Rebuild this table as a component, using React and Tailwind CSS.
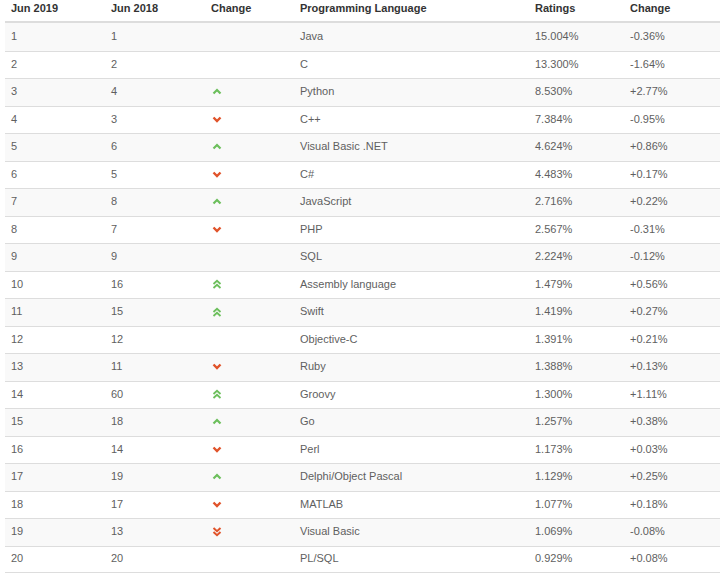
import React from "react";

const rows = [
  [1, 1, "", "Java", "15.004%", "-0.36%"],
  [2, 2, "", "C", "13.300%", "-1.64%"],
  [3, 4, "up", "Python", "8.530%", "+2.77%"],
  [4, 3, "down", "C++", "7.384%", "-0.95%"],
  [5, 6, "up", "Visual Basic .NET", "4.624%", "+0.86%"],
  [6, 5, "down", "C#", "4.483%", "+0.17%"],
  [7, 8, "up", "JavaScript", "2.716%", "+0.22%"],
  [8, 7, "down", "PHP", "2.567%", "-0.31%"],
  [9, 9, "", "SQL", "2.224%", "-0.12%"],
  [10, 16, "up2", "Assembly language", "1.479%", "+0.56%"],
  [11, 15, "up2", "Swift", "1.419%", "+0.27%"],
  [12, 12, "", "Objective-C", "1.391%", "+0.21%"],
  [13, 11, "down", "Ruby", "1.388%", "+0.13%"],
  [14, 60, "up2", "Groovy", "1.300%", "+1.11%"],
  [15, 18, "up", "Go", "1.257%", "+0.38%"],
  [16, 14, "down", "Perl", "1.173%", "+0.03%"],
  [17, 19, "up", "Delphi/Object Pascal", "1.129%", "+0.25%"],
  [18, 17, "down", "MATLAB", "1.077%", "+0.18%"],
  [19, 13, "down2", "Visual Basic", "1.069%", "-0.08%"],
  [20, 20, "", "PL/SQL", "0.929%", "+0.08%"],
];

function Icon({ type }) {
  if (!type) return null;
  const green = "#6cbf5c";
  const red = "#e0532a";
  if (type === "up")
    return (
      <svg width="10" height="7" viewBox="0 0 10 7">
        <polyline points="1.5,5.5 5,2 8.5,5.5" fill="none" stroke={green} strokeWidth="2.2" />
      </svg>
    );
  if (type === "down")
    return (
      <svg width="10" height="7" viewBox="0 0 10 7">
        <polyline points="1.5,1.5 5,5 8.5,1.5" fill="none" stroke={red} strokeWidth="2.4" />
      </svg>
    );
  if (type === "up2")
    return (
      <svg width="10" height="10" viewBox="0 0 10 10">
        <polyline points="1.5,5 5,1.8 8.5,5" fill="none" stroke={green} strokeWidth="1.8" />
        <polyline points="1.5,9 5,5.8 8.5,9" fill="none" stroke={green} strokeWidth="1.8" />
      </svg>
    );
  return (
    <svg width="10" height="10" viewBox="0 0 10 10">
      <polyline points="1.5,1 5,4.2 8.5,1" fill="none" stroke={red} strokeWidth="2" />
      <polyline points="1.5,5 5,8.2 8.5,5" fill="none" stroke={red} strokeWidth="2" />
    </svg>
  );
}

const cols = "grid grid-cols-[100px_100px_89px_235px_95px_90px]";

export default function App() {
  return (
    <div
      className="w-[720px] h-[580px] bg-white pl-[5px]"
      style={{ fontFamily: '"Liberation Sans", Arial, sans-serif' }}
    >
      <div className={`${cols} h-[23px] border-b-2 border-[#dddddd] text-[11px] font-bold text-[#333333]`}>
        {["Jun 2019", "Jun 2018", "Change", "Programming Language", "Ratings", "Change"].map((h, i) => (
          <div key={i} className="pl-[6px] flex items-center pb-[7px]">
            {h}
          </div>
        ))}
      </div>
      {rows.map((r, i) => (
        <div
          key={i}
          className={`${cols} h-[27.5px] text-[11px] text-[#5f5f5f] ${i % 2 === 0 ? "bg-[#f9f9f9]" : "bg-white"} ${i > 0 ? "border-t border-[#dddddd]" : ""} ${i === rows.length - 1 ? "border-b border-[#dddddd]" : ""}`}
        >
          <div className="pl-[6px] flex items-center pb-[2px]">{r[0]}</div>
          <div className="pl-[6px] flex items-center pb-[2px]">{r[1]}</div>
          <div className="pl-[7px] flex items-center pb-[1px]">
            <Icon type={r[2]} />
          </div>
          <div className="pl-[6px] flex items-center pb-[2px]">{r[3]}</div>
          <div className="pl-[6px] flex items-center pb-[2px]">{r[4]}</div>
          <div className="pl-[6px] flex items-center pb-[2px]">{r[5]}</div>
        </div>
      ))}
    </div>
  );
}
